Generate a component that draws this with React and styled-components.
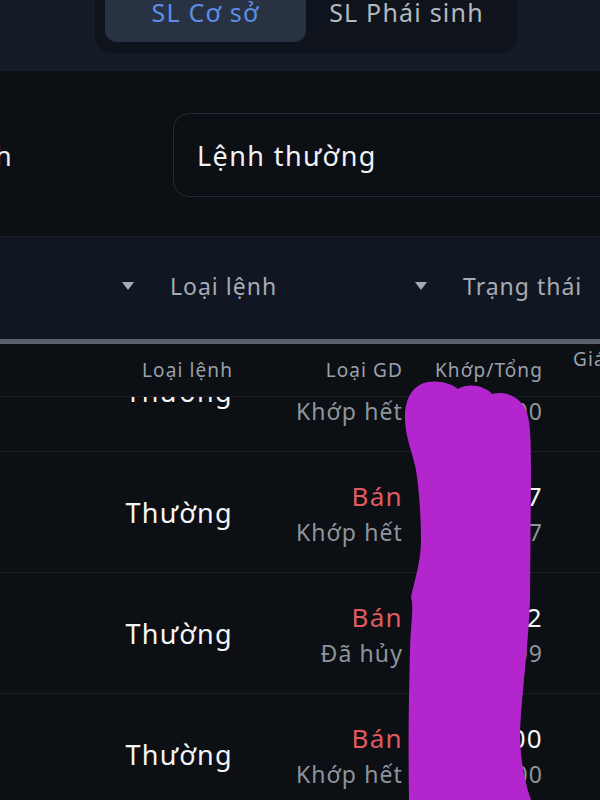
import styled, { createGlobalStyle } from "styled-components";

const GlobalStyle = createGlobalStyle`
  html, body {
    margin: 0;
    padding: 0;
    background: #0c0f14;
  }
  * {
    box-sizing: border-box;
  }
`;

const orders = [
  { type: "Thường", side: "Bán", status: "Khớp hết", matched: "1,000", total: "1,000" },
  { type: "Thường", side: "Bán", status: "Khớp hết", matched: "2,327", total: "2,327" },
  { type: "Thường", side: "Bán", status: "Đã hủy", matched: "1,002", total: "5,009" },
  { type: "Thường", side: "Bán", status: "Khớp hết", matched: "3,000", total: "3,000" },
];

const App = () => {
  return (
    <Screen>
      <GlobalStyle />
      <TopBar>
        <Segment>
          <SegTab $active>SL Cơ sở</SegTab>
          <SegTab>SL Phái sinh</SegTab>
        </Segment>
      </TopBar>

      <FormSection>
        <FormRow>
          <FormLabel>Loại lệnh</FormLabel>
          <Field>Lệnh thường</Field>
        </FormRow>
      </FormSection>

      <FilterBar>
        <Filter>
          <Caret />
          <span>Loại lệnh</span>
        </Filter>
        <Filter>
          <Caret />
          <span>Trạng thái</span>
        </Filter>
      </FilterBar>

      <HeadRow>
        <HeadCell>Loại lệnh</HeadCell>
        <HeadCell>Loại GD</HeadCell>
        <HeadCell>Khớp/Tổng</HeadCell>
        <HeadCell $left>Giá</HeadCell>
      </HeadRow>

      <Body>
        {orders.map((o, i) => (
          <Row key={i} $first={i === 0}>
            <TypeCell>{o.type}</TypeCell>
            <Stack>
              <Main $sell>{o.side}</Main>
              <Sub>{o.status}</Sub>
            </Stack>
            <Stack>
              <Main>{o.matched}</Main>
              <Sub>{o.total}</Sub>
            </Stack>
            <Stack $left>
              <Main>&nbsp;</Main>
            </Stack>
          </Row>
        ))}
      </Body>

      <Scribble viewBox="0 0 600 800" width="600" height="800">
        <path
          d="M405 420 C404 398 414 384 428 382 C440 380 452 384 458 389 C468 382 486 386 492 394 C505 391 516 396 522 404 C530 412 531 430 531 470 L530 600 C528 650 522 690 520 730 C520 765 526 785 531 800 L409 800 C408 740 409 690 410 650 C411 620 414 608 411 597 C416 575 421 560 421 540 C421 515 419 490 416 470 C412 450 406 440 405 420 Z"
          fill="#b426cd"
        />
      </Scribble>
    </Screen>
  );
};

const Screen = styled.div`
  position: relative;
  width: 600px;
  height: 800px;
  overflow: hidden;
  background: #0c0f14;
  font-family: "Noto Sans", Lato, sans-serif;
  display: flex;
  flex-direction: column;
`;

const TopBar = styled.div`
  height: 71px;
  flex-shrink: 0;
  background: #161c27;
  padding-left: 95px;
  display: flex;
  align-items: flex-end;
  padding-bottom: 18px;
`;

const Segment = styled.div`
  display: flex;
  width: 422px;
  padding: 0 10px 11px;
  background: #0f141c;
  border-radius: 0 0 16px 16px;
`;

const SegTab = styled.div`
  flex: 1;
  height: 62px;
  margin-top: -20px;
  padding-top: 2px;
  display: flex;
  align-items: center;
  justify-content: center;
  border-radius: 12px;
  font-size: 25px;
  letter-spacing: 1.2px;
  background: ${(p) => (p.$active ? "#283242" : "transparent")};
  color: ${(p) => (p.$active ? "#5d8ee6" : "#b4b8bf")};
`;

const FormSection = styled.div`
  height: 165px;
  flex-shrink: 0;
  background: #0c0f14;
  padding-top: 42px;
`;

const FormRow = styled.div`
  display: grid;
  grid-template-columns: 133px 1fr;
  column-gap: 160px;
  align-items: center;
  margin-left: -120px;
  margin-right: -30px;
`;

const FormLabel = styled.div`
  text-align: right;
  white-space: nowrap;
  font-size: 27px;
  letter-spacing: 1.2px;
  color: #eceef0;
`;

const Field = styled.div`
  height: 84px;
  display: flex;
  align-items: center;
  padding-left: 23px;
  border: 1.5px solid #262c36;
  border-radius: 16px;
  font-size: 27px;
  letter-spacing: 1.4px;
  color: #f1f2f4;
`;

const FilterBar = styled.div`
  height: 108px;
  flex-shrink: 0;
  background: #111722;
  border-top: 1px solid #181e29;
  border-bottom: 5px solid #5c6068;
  display: flex;
  align-items: center;
  padding-left: 122px;
  padding-bottom: 4px;
`;

const Filter = styled.div`
  width: 293px;
  flex-shrink: 0;
  display: flex;
  align-items: center;
  gap: 36px;
  font-size: 23px;
  letter-spacing: 1px;
  color: #a7abb3;
`;

const Caret = styled.i`
  width: 0;
  height: 0;
  border-left: 6.5px solid transparent;
  border-right: 6.5px solid transparent;
  border-top: 8px solid #a7abb3;
`;

const columns = "232px 170px 140px 1fr";

const HeadRow = styled.div`
  height: 53px;
  flex-shrink: 0;
  display: grid;
  grid-template-columns: ${columns};
  align-items: center;
  background: #0c0f14;
  border-bottom: 1px solid #1b1f27;
  position: relative;
  z-index: 1;
`;

const HeadCell = styled.div`
  font-size: 19px;
  letter-spacing: 1.1px;
  color: #9ca1a9;
  white-space: nowrap;
  text-align: ${(p) => (p.$left ? "left" : "right")};
  padding-left: ${(p) => (p.$left ? "31px" : "0")};
  margin-right: ${(p) => (p.$left ? "0" : "-1px")};
  align-self: ${(p) => (p.$left ? "start" : "center")};
  margin-top: ${(p) => (p.$left ? "2px" : "0")};
`;

const Body = styled.div`
  flex: 1;
  overflow: hidden;
`;

const Row = styled.div`
  height: 121px;
  display: grid;
  grid-template-columns: ${columns};
  align-items: center;
  border-bottom: 1px solid #1a1e25;
  margin-top: ${(p) => (p.$first ? "-66px" : "0")};
`;

const TypeCell = styled.div`
  text-align: right;
  font-size: 27px;
  letter-spacing: 1.3px;
  margin-right: -1px;
  color: #f4f5f6;
`;

const Stack = styled.div`
  display: flex;
  flex-direction: column;
  align-items: ${(p) => (p.$left ? "flex-start" : "flex-end")};
  margin-right: ${(p) => (p.$left ? "0" : "-1px")};
  padding-top: 4px;
  white-space: nowrap;
`;

const Main = styled.div`
  font-size: 26px;
  line-height: 36px;
  letter-spacing: 1.3px;
  color: ${(p) => (p.$sell ? "#e15a5f" : "#f2f3f5")};
`;

const Sub = styled.div`
  font-size: 23px;
  line-height: 36px;
  letter-spacing: 1.1px;
  color: #8f949c;
`;

const Scribble = styled.svg`
  position: absolute;
  top: 0;
  left: 0;
  pointer-events: none;
  z-index: 2;
`;

export default App;
